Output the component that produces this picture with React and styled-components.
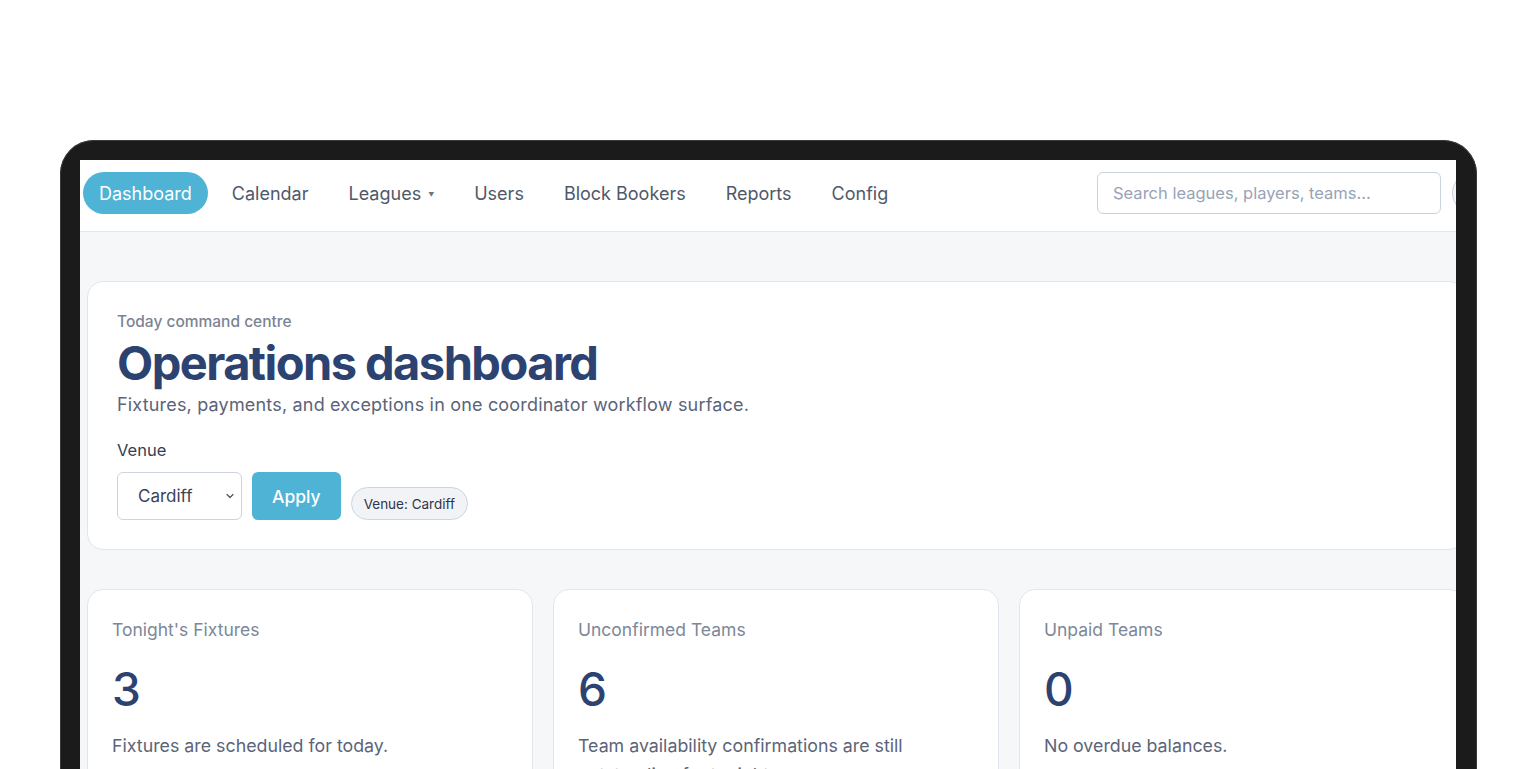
import React from 'react';
import styled, { createGlobalStyle } from 'styled-components';

const GlobalStyle = createGlobalStyle`
    html, body {
        margin: 0;
        padding: 0;
        background: #ffffff;
        overflow: hidden;
        font-family: Inter, "Noto Sans", "Liberation Sans", sans-serif;
    }
    * {
        box-sizing: border-box;
    }
`;

const Stage = styled.div`
    width: 1528px;
    height: 769px;
    padding: 140px 0 0 60px;
    overflow: hidden;
`;

const Device = styled.div`
    width: 1417px;
    height: 700px;
    background: #1b1b1b;
    border-radius: 34px 34px 0 0;
    padding: 20px 21px 0 20px;
    box-shadow: inset 0 0 0 1px #3a3a3a;
`;

const Screen = styled.div`
    width: 1376px;
    height: 680px;
    background: #f6f7f9;
    overflow: hidden;
`;

const Page = styled.div`
    width: 1463px;
`;

const Nav = styled.nav`
    height: 72px;
    background: #ffffff;
    border-bottom: 1px solid #e3e7ee;
    display: flex;
    align-items: flex-start;
    padding: 12px 3px 0;
`;

const NavLinks = styled.div`
    display: flex;
    align-items: center;
    gap: 8px;
`;

const NavLink = styled.a`
    display: flex;
    align-items: center;
    gap: 7px;
    height: 42px;
    padding: 0 16px;
    border-radius: 21px;
    font-size: 18px;
    color: ${props => props.active ? '#ffffff' : '#4f586b'};
    background: ${props => props.active ? '#4fb3d5' : 'transparent'};
    text-decoration: none;
    cursor: pointer;
`;

const Caret = styled.span`
    font-size: 6px;
    color: #6b7280;
    margin-top: 3px;
`;

const NavRight = styled.div`
    margin-left: auto;
    display: flex;
    align-items: center;
    gap: 11px;
`;

const Search = styled.input`
    width: 344px;
    height: 42px;
    border: 1px solid #c9d2df;
    border-radius: 6px;
    padding: 0 15px;
    font-family: inherit;
    font-size: 16.5px;
    color: #334155;
    outline: none;
    &::placeholder {
        color: #97a3b6;
    }
`;

const GhostButton = styled.button`
    width: 88px;
    height: 42px;
    border: 1px solid #c9d2df;
    border-radius: 21px;
    background: #f3f5f8;
`;

const Main = styled.main`
    padding: 49px 0 0 7px;
`;

const Panel = styled.section`
    background: #ffffff;
    border: 1px solid #e1e6ee;
    border-radius: 16px;
`;

const Hero = styled(Panel)`
    width: 1378px;
    height: 269px;
    padding: 30px 29px;
`;

const Eyebrow = styled.p`
    margin: 0;
    font-size: 15.5px;
    font-weight: 500;
    color: #7b8494;
    line-height: 20px;
`;

const Title = styled.h1`
    margin: 2px 0 0;
    font-size: 47px;
    font-weight: 700;
    letter-spacing: -0.033em;
    line-height: 58px;
    color: #2c4372;
`;

const Lead = styled.p`
    margin: 1px 0 0;
    font-size: 18px;
    letter-spacing: 0.01em;
    color: #5b6478;
    line-height: 24px;
`;

const FieldLabel = styled.label`
    display: block;
    margin-top: 22px;
    font-size: 16.5px;
    color: #334155;
    line-height: 22px;
`;

const Controls = styled.div`
    display: flex;
    align-items: flex-end;
    gap: 10px;
    margin-top: 11px;
`;

const SelectBox = styled.div`
    width: 125px;
    height: 48px;
    border: 1px solid #cdd4de;
    border-radius: 6px;
    display: flex;
    align-items: center;
    justify-content: space-between;
    padding: 0 5px 0 20px;
    font-size: 17px;
    color: #3b4356;
`;

const PrimaryButton = styled.button`
    height: 48px;
    padding: 0 20px;
    border: none;
    border-radius: 6px;
    background: #4fb3d5;
    color: #ffffff;
    font-family: inherit;
    font-size: 17.5px;
    font-weight: 500;
`;

const Chip = styled.span`
    display: inline-flex;
    align-items: center;
    height: 33px;
    padding: 0 12px;
    border: 1px solid #cdd4de;
    border-radius: 17px;
    background: #f1f3f7;
    font-size: 13.5px;
    color: #2f3747;
`;

const StatGrid = styled.div`
    display: grid;
    grid-template-columns: repeat(3, 446px);
    gap: 20px;
    margin-top: 39px;
`;

const StatCard = styled(Panel)`
    height: 220px;
    padding: 28px 24px;
`;

const StatLabel = styled.div`
    font-size: 17.5px;
    color: #7c8799;
    line-height: 24px;
`;

const StatValue = styled.div`
    margin-top: 21px;
    font-size: 46px;
    font-weight: 500;
    color: #2c4372;
    line-height: 52px;
`;

const StatNote = styled.p`
    margin: 16px 0 0;
    font-size: 17.8px;
    color: #5b6478;
    line-height: 29px;
    max-width: 340px;
`;

const ChevronDown = () => (
    <svg width="12" height="12" viewBox="0 0 12 12" fill="none">
        <path d="M3 4.5 L6 7.5 L9 4.5" stroke="#4b5563" strokeWidth="1.2" strokeLinecap="round" strokeLinejoin="round" />
    </svg>
);

const links = ['Dashboard', 'Calendar', 'Leagues', 'Users', 'Block Bookers', 'Reports', 'Config'];

const stats = [
    { label: "Tonight's Fixtures", value: '3', note: 'Fixtures are scheduled for today.' },
    { label: 'Unconfirmed Teams', value: '6', note: 'Team availability confirmations are still outstanding for tonight.' },
    { label: 'Unpaid Teams', value: '0', note: 'No overdue balances.' },
];

export default function App() {
    return (
        <>
            <GlobalStyle />
            <Stage>
                <Device>
                    <Screen>
                        <Page>
                            <Nav>
                                <NavLinks>
                                    {links.map(link => (
                                        <NavLink key={link} active={link === 'Dashboard'}>
                                            {link}
                                            {link === 'Leagues' && <Caret>▼</Caret>}
                                        </NavLink>
                                    ))}
                                </NavLinks>
                                <NavRight>
                                    <Search placeholder="Search leagues, players, teams..." />
                                    <GhostButton />
                                </NavRight>
                            </Nav>
                            <Main>
                                <Hero>
                                    <Eyebrow>Today command centre</Eyebrow>
                                    <Title>Operations dashboard</Title>
                                    <Lead>Fixtures, payments, and exceptions in one coordinator workflow surface.</Lead>
                                    <FieldLabel>Venue</FieldLabel>
                                    <Controls>
                                        <SelectBox>
                                            Cardiff
                                            <ChevronDown />
                                        </SelectBox>
                                        <PrimaryButton>Apply</PrimaryButton>
                                        <Chip>Venue: Cardiff</Chip>
                                    </Controls>
                                </Hero>
                                <StatGrid>
                                    {stats.map(stat => (
                                        <StatCard key={stat.label}>
                                            <StatLabel>{stat.label}</StatLabel>
                                            <StatValue>{stat.value}</StatValue>
                                            <StatNote>{stat.note}</StatNote>
                                        </StatCard>
                                    ))}
                                </StatGrid>
                            </Main>
                        </Page>
                    </Screen>
                </Device>
            </Stage>
        </>
    );
}
